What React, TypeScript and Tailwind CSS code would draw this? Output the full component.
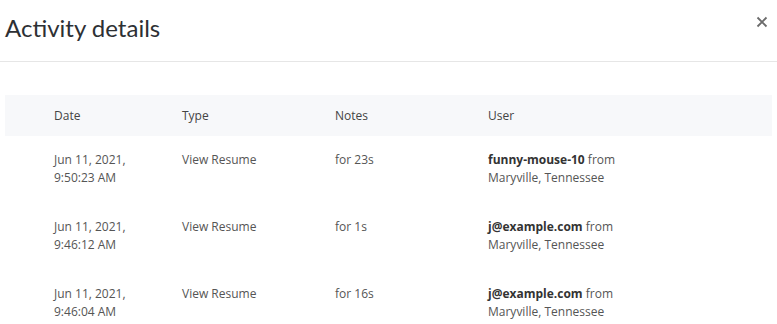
import React from "react";

const rows = [
  { date: "Jun 11, 2021,", time: "9:50:23 AM", type: "View Resume", notes: "for 23s", user: "funny-mouse-10" },
  { date: "Jun 11, 2021,", time: "9:46:12 AM", type: "View Resume", notes: "for 1s", user: "j@example.com" },
  { date: "Jun 11, 2021,", time: "9:46:04 AM", type: "View Resume", notes: "for 16s", user: "j@example.com" },
];

export default function App() {
  return (
    <div className="w-[777px] h-[324px] bg-white overflow-hidden">
      <div className="flex items-start justify-between h-[62px] border-b border-[#e6e6e6]">
        <h1 className="ml-[5px] mt-[12px] text-[24px] leading-[32px] text-[#2d3034] font-['Lato',sans-serif]">
          Activity details
        </h1>
        <button className="mr-[8px] mt-[15px] w-[14px] h-[14px] flex items-center justify-center">
          <svg width="12" height="12" viewBox="0 0 12 12">
            <path d="M1.5 1.5 L10.5 10.5 M10.5 1.5 L1.5 10.5" stroke="#6b6b6b" strokeWidth="1.8" />
          </svg>
        </button>
      </div>
      <div className="mx-[5px] mt-[33px] font-['Open_Sans',sans-serif] text-[12px] leading-[18px] text-[#555]">
        <div className="grid grid-cols-[128px_153px_153px_1fr] pl-[49px] h-[41px] items-center bg-[#f7f8fa] text-[#444]">
          <div>Date</div>
          <div>Type</div>
          <div>Notes</div>
          <div>User</div>
        </div>
        {rows.map((r, i) => (
          <div key={i} className="grid grid-cols-[128px_153px_153px_1fr] pl-[49px] pt-[15px] pb-[16px]">
            <div>
              {r.date}
              <br />
              {r.time}
            </div>
            <div>{r.type}</div>
            <div>{r.notes}</div>
            <div>
              <span className="font-bold text-[#333]">{r.user}</span> from
              <br />
              Maryville, Tennessee
            </div>
          </div>
        ))}
      </div>
    </div>
  );
}
